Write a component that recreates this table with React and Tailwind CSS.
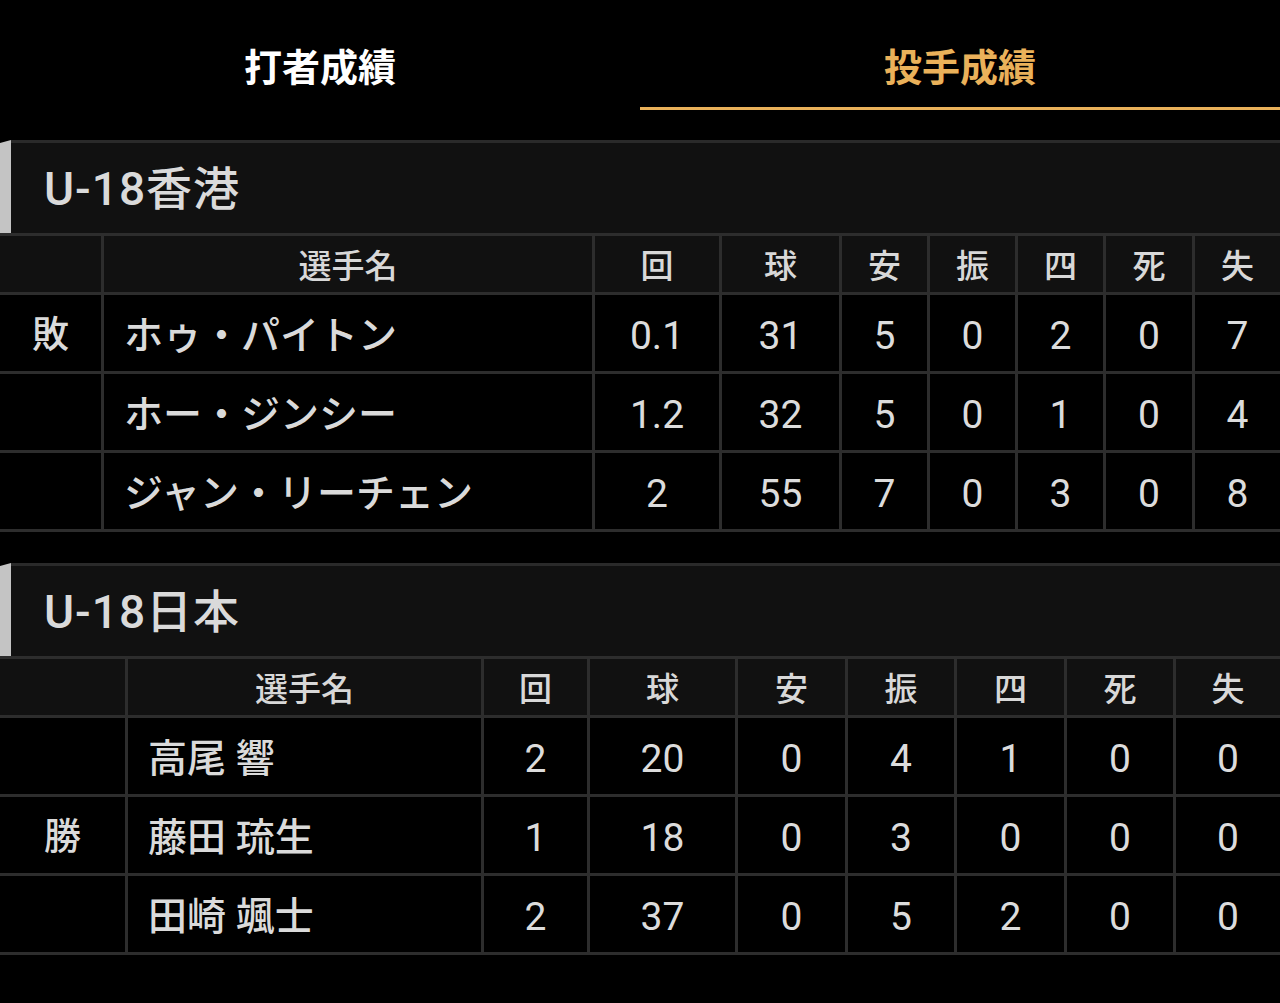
import React from 'react';

const FONT = "font-['Roboto','Noto_Sans_CJK_JP',sans-serif]";

const HEADERS = ['', '選手名', '回', '球', '安', '振', '四', '死', '失'];

const teams = [
  {
    name: 'U-18香港',
    cols: 'grid-cols-[101px_488px_124px_117px_85px_85px_85px_86px_85px]',
    rows: [
      { result: '敗', name: 'ホゥ・パイトン', stats: ['0.1', '31', '5', '0', '2', '0', '7'] },
      { result: '', name: 'ホー・ジンシー', stats: ['1.2', '32', '5', '0', '1', '0', '4'] },
      { result: '', name: 'ジャン・リーチェン', stats: ['2', '55', '7', '0', '3', '0', '8'] },
    ],
  },
  {
    name: 'U-18日本',
    cols: 'grid-cols-[125px_353px_103px_145px_107px_106px_107px_106px_104px]',
    rows: [
      { result: '', name: '高尾 響', stats: ['2', '20', '0', '4', '1', '0', '0'] },
      { result: '勝', name: '藤田 琉生', stats: ['1', '18', '0', '3', '0', '0', '0'] },
      { result: '', name: '田崎 颯士', stats: ['2', '37', '0', '5', '2', '0', '0'] },
    ],
  },
];

function TeamHeader({ name }) {
  return (
    <div className="flex h-[93px]">
      <div className="w-[11px] bg-[#c4c4c4] [clip-path:polygon(0_3px,100%_0,100%_100%,0_100%)]" />
      <div className="flex flex-1 items-center border-t-[3px] border-[#2a2a2a] bg-[#111111] pl-[33px] pt-[2px]">
        <span className="text-[46px] font-medium leading-none tracking-[1px] text-[#dadada]">{name}</span>
      </div>
    </div>
  );
}

function PitchingTable({ team }) {
  return (
    <div className={`grid ${team.cols} gap-[3px] border-y-[3px] border-[#2d2d2d] bg-[#2d2d2d]`}>
      {HEADERS.map((label, index) => (
        <div
          className="flex h-[56px] items-center justify-center bg-[#111111] pt-[5px] text-[33px] font-medium text-[#d8d8d8]"
          key={`h-${index}`}
        >
          {label}
        </div>
      ))}
      {team.rows.map((row) => (
        <React.Fragment key={row.name}>
          <div className="flex h-[76px] items-center justify-center bg-black pt-[6px] text-[37px] font-medium text-[#dadada]">
            {row.result}
          </div>
          <div className="flex h-[76px] items-center bg-black pl-[20px] pt-[6px] text-[39px] font-medium text-[#dadada]">
            {row.name}
          </div>
          {row.stats.map((value, index) => (
            <div
              className="flex h-[76px] items-center justify-center bg-black pt-[6px] text-[39px] text-[#dcdcdc]"
              key={`${row.name}-${index}`}
            >
              {value}
            </div>
          ))}
        </React.Fragment>
      ))}
    </div>
  );
}

export default function App() {
  return (
    <div className={`min-h-[1003px] w-[1280px] bg-black ${FONT}`}>
      <div className="flex h-[110px]">
        <div className="flex flex-1 flex-col">
          <div className="flex flex-1 items-center justify-center pt-[30px] text-[38px] font-bold text-white">
            打者成績
          </div>
          <div className="h-[3px]" />
        </div>
        <div className="flex flex-1 flex-col">
          <div className="flex flex-1 items-center justify-center pt-[30px] text-[38px] font-bold text-[#eab15a]">
            投手成績
          </div>
          <div className="h-[3px] bg-[#eab15a]" />
        </div>
      </div>

      <div className="mt-[30px]">
        <TeamHeader name={teams[0].name} />
        <PitchingTable team={teams[0]} />
      </div>

      <div className="mt-[31px]">
        <TeamHeader name={teams[1].name} />
        <PitchingTable team={teams[1]} />
      </div>
    </div>
  );
}
